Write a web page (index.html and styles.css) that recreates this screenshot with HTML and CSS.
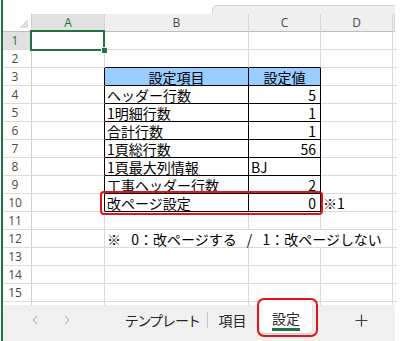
FILE: index.html
```html
<!DOCTYPE html>
<html lang="ja">
<head>
<meta charset="utf-8">
<title>設定</title>
<link rel="stylesheet" href="styles.css">
</head>
<body>
<div class="app">
  <div class="topstrip"><div class="fbar"></div></div>
  <div class="sheet">
    <!-- header -->
    <div class="corner"><svg width="9" height="9" viewBox="0 0 9 9"><polygon points="9,0 9,9 0,9" fill="#dcdcdc"/></svg></div>
    <div class="ch sel">A</div><div class="ch">B</div><div class="ch">C</div><div class="ch">D</div><div class="ch e"></div>
    <!-- 1 -->
    <div class="rh sel">1</div><div class="c"></div><div class="c"></div><div class="c"></div><div class="c"></div><div class="c e"></div>
    <!-- 2 -->
    <div class="rh">2</div><div class="c"></div><div class="c tb"></div><div class="c tb"></div><div class="c"></div><div class="c e"></div>
    <!-- 3 -->
    <div class="rh">3</div><div class="c tl"></div><div class="c t hd">設定項目</div><div class="c t hd">設定値</div><div class="c"></div><div class="c e"></div>
    <!-- 4 -->
    <div class="rh">4</div><div class="c tl"></div><div class="c t">ヘッダー行数</div><div class="c t num">5</div><div class="c"></div><div class="c e"></div>
    <!-- 5 -->
    <div class="rh">5</div><div class="c tl"></div><div class="c t">1明細行数</div><div class="c t num">1</div><div class="c"></div><div class="c e"></div>
    <!-- 6 -->
    <div class="rh">6</div><div class="c tl"></div><div class="c t">合計行数</div><div class="c t num">1</div><div class="c"></div><div class="c e"></div>
    <!-- 7 -->
    <div class="rh">7</div><div class="c tl"></div><div class="c t">1頁総行数</div><div class="c t num">56</div><div class="c"></div><div class="c e"></div>
    <!-- 8 -->
    <div class="rh">8</div><div class="c tl"></div><div class="c t">1頁最大列情報</div><div class="c t">BJ</div><div class="c"></div><div class="c e"></div>
    <!-- 9 -->
    <div class="rh">9</div><div class="c tl"></div><div class="c t">工事ヘッダー行数</div><div class="c t num">2</div><div class="c"></div><div class="c e"></div>
    <!-- 10 -->
    <div class="rh">10</div><div class="c tl"></div><div class="c t">改ページ設定</div><div class="c t num">0</div><div class="c">※1</div><div class="c e"></div>
    <!-- 11 -->
    <div class="rh">11</div><div class="c"></div><div class="c"></div><div class="c"></div><div class="c"></div><div class="c e"></div>
    <!-- 12 -->
    <div class="rh">12</div><div class="c"></div><div class="c span3">※&#8194; 0：改ページする&#8194; /&#8194; 1：改ページしない</div><div class="c e"></div>
    <!-- 13 -->
    <div class="rh">13</div><div class="c"></div><div class="c"></div><div class="c"></div><div class="c"></div><div class="c e"></div>
    <!-- 14 -->
    <div class="rh">14</div><div class="c"></div><div class="c"></div><div class="c"></div><div class="c"></div><div class="c e"></div>
    <!-- 15 -->
    <div class="rh">15</div><div class="c"></div><div class="c"></div><div class="c"></div><div class="c"></div><div class="c e"></div>
    <!-- partial 16 -->
    <div class="rh p"></div><div class="c p"></div><div class="c p"></div><div class="c p"></div><div class="c p"></div><div class="c p e"></div>

    <div class="selection"><div class="handle"></div></div>
  </div>
  <div class="tabs">
    <svg class="nav first" width="6" height="10" viewBox="0 0 6 10"><polyline points="5,1 1,5 5,9" fill="none" stroke="#a6a6a6" stroke-width="1"/></svg>
    <svg class="nav second" width="6" height="10" viewBox="0 0 6 10"><polyline points="1,1 5,5 1,9" fill="none" stroke="#a6a6a6" stroke-width="1"/></svg>
    <div class="tab t1">テンプレート</div>
    <div class="sep"></div>
    <div class="tab t2">項目</div>
    <div class="tab active"><span class="label">設定</span><span class="underline"></span></div>
    <svg class="plus" width="13" height="13" viewBox="0 0 13 13"><path d="M6.5 0.5V12.5M0.5 6.5H12.5" stroke="#404040" stroke-width="1.2" fill="none"/></svg>
  </div>
  <div class="mark mark-row"></div>
  <div class="mark mark-tab"></div>
</div>
</body>
</html>
```
FILE: styles.css
```css
* { box-sizing: border-box; }
html, body { margin: 0; padding: 0; background: #ffffff; }
body { width: 401px; height: 341px; overflow: hidden; }

.app {
  position: relative;
  margin-left: 1px;
  width: 394px;
  height: 341px;
  border-left: 2px solid #217346;
  font-family: "Noto Sans CJK JP", sans-serif;
}

.topstrip { height: 14px; padding-top: 5px; }
.fbar {
  margin-left: 209px;
  height: 9px;
  background: #efefef;
  border-top: 1px solid #d4d4d4;
  border-left: 1px solid #d4d4d4;
  border-top-left-radius: 5px;
}

.sheet {
  display: grid;
  grid-template-columns: 29px 73px 144px 72px 72px 2px;
  grid-template-rows: 18px repeat(15, 18px) 3px;
  position: relative;
}

.corner {
  background: #ffffff;
  border-right: 1px solid #cfcfcf;
  border-bottom: 1px solid #bdbdbd;
  display: flex;
  align-items: flex-end;
  justify-content: flex-end;
  padding: 0 3px 3px 0;
}
.corner svg { display: block; }

.ch {
  background: #efefef;
  border-right: 1px solid #d6d6d6;
  border-bottom: 1px solid #bdbdbd;
  display: flex;
  align-items: center;
  justify-content: center;
  font-family: "Open Sans", sans-serif;
  font-size: 12px;
  color: #4a4a4a;
  line-height: 1;
}
.ch.sel { background: #e1e1e1; color: #217346; }

.rh {
  background: #ffffff;
  border-right: 1px solid #cfcfcf;
  border-bottom: 1px solid #dcdcdc;
  display: flex;
  align-items: center;
  justify-content: center;
  padding-right: 4px;
  font-family: "Open Sans", sans-serif;
  font-size: 12px;
  color: #4a4a4a;
  line-height: 1;
}
.rh.sel { background: #e1e1e1; color: #217346; }

.c {
  border-right: 1px solid #dadada;
  border-bottom: 1px solid #dadada;
  display: flex;
  align-items: center;
  padding: 0 2px 0 2px;
  font-size: 14px;
  line-height: 1;
  color: #000000;
  white-space: nowrap;
}
.c.e { border-right: none; }
.c.p, .rh.p { border-bottom: none; }

.c.tl { border-right-color: #000000; }
.c.tb { border-bottom-color: #000000; }
.c.t { border-right-color: #000000; border-bottom-color: #000000; }
.c.hd { background: #99ccff; justify-content: center; }
.c.num { justify-content: flex-end; padding-right: 4px; font-family: "Noto Sans CJK JP", sans-serif; }
.span3 { grid-column: span 3; }

.selection {
  position: absolute;
  left: 27px;
  top: 16px;
  width: 75px;
  height: 21px;
  border: 2px solid #217346;
  pointer-events: none;
}
.handle {
  position: absolute;
  right: -4px;
  bottom: -4px;
  width: 6px;
  height: 6px;
  background: #217346;
  border-left: 1px solid #ffffff;
  border-top: 1px solid #ffffff;
}

.tabs {
  height: 36px;
  background: #f0f0f0;
  display: flex;
  align-items: center;
  padding-bottom: 6px;
  width: 392px;
  position: relative;
}
.nav { display: block; flex: none; }
.nav.first { margin-left: 29px; }
.nav.second { margin-left: 26px; }

.tab {
  flex: none;
  font-size: 14px;
  line-height: 16px;
  color: #262626;
  text-align: center;
  font-feature-settings: "palt";
}
.t1 { margin-left: 48px; width: 89px; }
.sep { flex: none; width: 1px; height: 16px; background: #c4c4c4; }
.t2 { width: 49px; }
.tab.active {
  align-self: flex-start;
  margin-top: -5px;
  margin-left: 3px;
  width: 52px;
  height: 33px;
  background: #ffffff;
  border-radius: 4px;
  box-shadow: 0 1px 2px rgba(0,0,0,0.18);
  display: flex;
  flex-direction: column;
  align-items: center;
  padding-top: 10px;
}
.tab.active .label { display: block; line-height: 16px; }
.tab.active .underline { display: block; width: 28px; height: 3px; margin-top: 2px; background: #217346; }
.plus { display: block; flex: none; margin-left: 43px; }

.mark {
  position: absolute;
  border: 2px solid #e8101a;
  pointer-events: none;
}
.mark-row { left: 97px; top: 191px; width: 223px; height: 24px; border-radius: 4px; }
.mark-tab { left: 254px; top: 298px; width: 61px; height: 39px; border-radius: 7px; }
```
